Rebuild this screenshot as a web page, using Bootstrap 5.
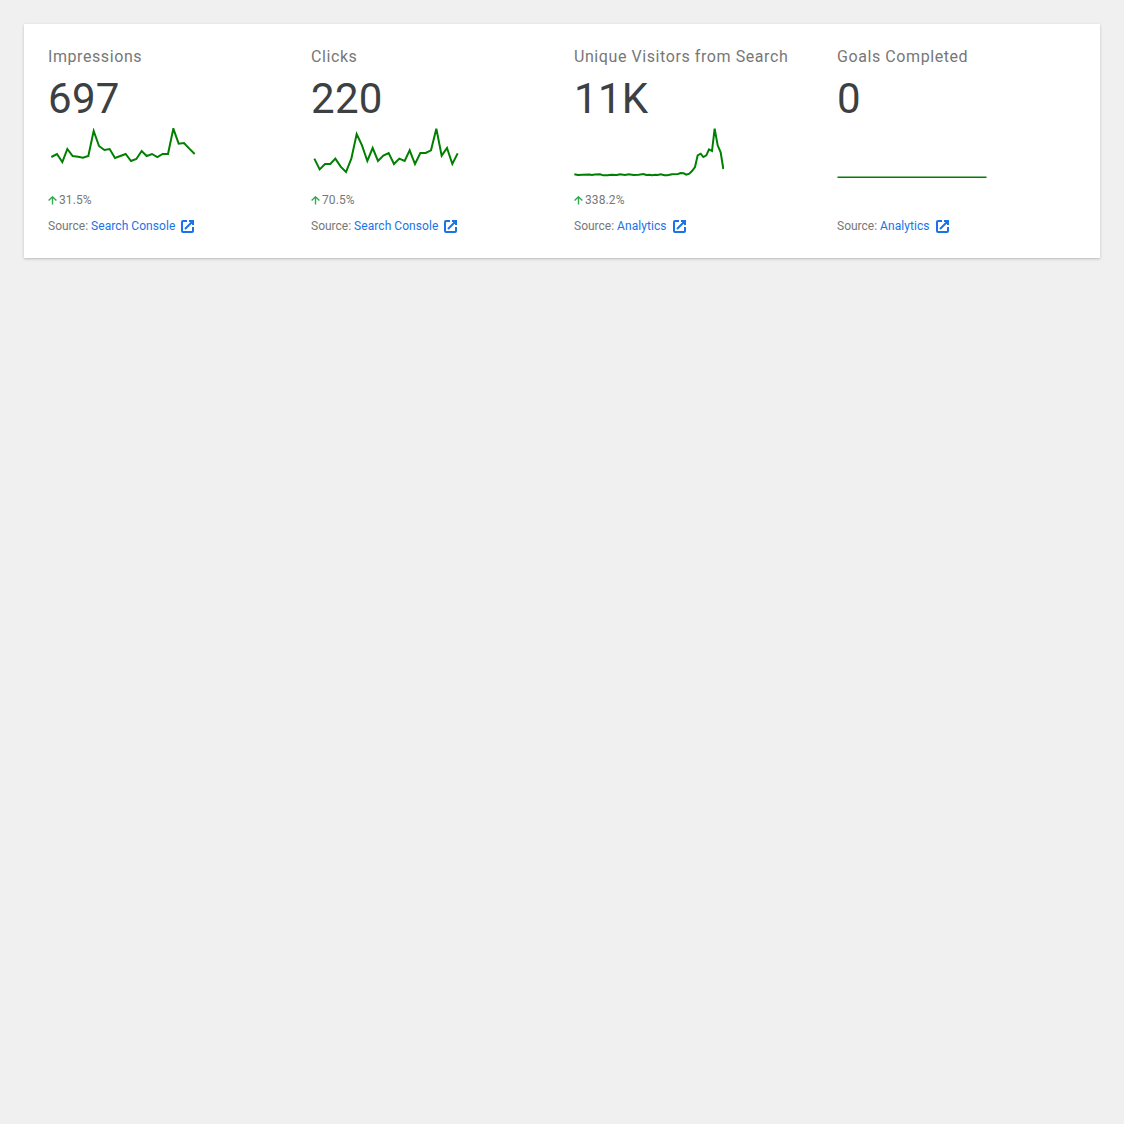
<!DOCTYPE html>
<html lang="en">
<head>
<meta charset="utf-8">
<meta name="viewport" content="width=device-width, initial-scale=1">
<title>Search overview</title>
<link href="https://cdn.jsdelivr.net/npm/bootstrap@5.3.0/dist/css/bootstrap.min.css" rel="stylesheet">
<style>
body{background:#f0f0f0;font-family:Roboto,"Liberation Sans",sans-serif;color:#777}
.overview{box-shadow:0 1px 3px rgba(0,0,0,.18),0 1px 1px rgba(0,0,0,.05)}
.metric{flex:1 1 0;min-width:0}
.metric-label{font-size:16px;line-height:18px;letter-spacing:.58px;font-weight:400;white-space:nowrap;color:#777}
.metric-value{font-size:42px;line-height:50px;letter-spacing:.3px;color:#3c4043;margin-top:8px}
.spark{width:150px;height:50px;margin-top:4px;fill:none;stroke:green;stroke-width:6}
.metric-change{font-size:12px;line-height:16px;height:16px;margin-top:14px;letter-spacing:.1px}
.metric-source{font-size:12px;line-height:16px;margin-top:10px}
.metric-source a{color:#1a73e8;letter-spacing:.06px}
.arrow{width:9px;height:9px;margin-right:2px;fill:none;stroke:#34a853;stroke-width:1.4}
.external{width:13px;height:13px;margin-left:6px;fill:none;stroke:#1a73e8;stroke-width:2}
</style>
</head>
<body>
<svg class="d-none">
<symbol id="up" viewBox="0 0 9 9"><path d="M4.5 8.5V.9M.6 4.6L4.5 .8l3.9 3.8"/></symbol>
<symbol id="ext" viewBox="0 0 13 13"><path d="M6 1H2Q1 1 1 2v9q0 1 1 1h9q1 0 1-1V7M8 1h4v4M12 1L4 9"/></symbol>
</svg>
<main class="p-4">
<section class="overview bg-white p-4 d-flex gap-4">
<article class="metric">
<h3 class="metric-label mb-0">Impressions</h3>
<div class="metric-value">697</div>
<svg class="spark d-block" viewBox="24 24 450 150"><polyline points="34,111 51,102 67,126 82,87 98,108 114,110 129,113 145,108 161,33 177,78 193,90 209,87 225,114 241,108 257,102 273,123 289,117 305,93 320,108 336,102 352,111 368,102 384,102 400,26 416,71 432,69 448,86 464,102"/></svg>
<div class="metric-change d-flex align-items-center"><svg class="arrow"><use href="#up"/></svg>31.5%</div>
<div class="metric-source d-flex align-items-center"><span>Source: <a class="text-decoration-none" href="#">Search Console</a></span><svg class="external"><use href="#ext"/></svg></div>
</article>
<article class="metric">
<h3 class="metric-label mb-0">Clicks</h3>
<div class="metric-value">220</div>
<svg class="spark d-block" viewBox="24 24 450 150"><polyline points="34,116 50,148 66,132 82,132 97,116 113,140 129,156 145,116 161,42 177,76 193,123 209,84 225,123 241,107 257,99 273,132 289,116 305,123 320,91 336,132 352,99 368,99 384,91 400,26 416,107 432,84 448,132 464,100"/></svg>
<div class="metric-change d-flex align-items-center"><svg class="arrow"><use href="#up"/></svg>70.5%</div>
<div class="metric-source d-flex align-items-center"><span>Source: <a class="text-decoration-none" href="#">Search Console</a></span><svg class="external"><use href="#ext"/></svg></div>
</article>
<article class="metric">
<h3 class="metric-label mb-0">Unique Visitors from Search</h3>
<div class="metric-value">11K</div>
<svg class="spark d-block" viewBox="24 24 450 150"><polyline points="25,163 36,165 50,164 70,163.500 78,165 86,163.500 102,163 112,166 125,166 136,164 153,165 162,163 177,165 188,163 203,165 218,164 232,162 241,165 250,164 258,166 268,164 275,165 284,163 296,166 304,166 318,163 336,162 344,159 353,160 361,164 370,161 378,153 387,141 395,106 404,101 412,111 421,106 429,88 438,93 446,26 455,76 464,97 472,147"/></svg>
<div class="metric-change d-flex align-items-center"><svg class="arrow"><use href="#up"/></svg>338.2%</div>
<div class="metric-source d-flex align-items-center"><span>Source: <a class="text-decoration-none" href="#">Analytics</a></span><svg class="external"><use href="#ext"/></svg></div>
</article>
<article class="metric">
<h3 class="metric-label mb-0">Goals Completed</h3>
<div class="metric-value">0</div>
<svg class="spark d-block" viewBox="24 24 450 150"><polyline points="25.5,172.5 472.5,172.5"/></svg>
<div class="metric-change"></div>
<div class="metric-source d-flex align-items-center"><span>Source: <a class="text-decoration-none" href="#">Analytics</a></span><svg class="external"><use href="#ext"/></svg></div>
</article>
</section>
</main>
<script src="https://cdn.jsdelivr.net/npm/bootstrap@5.3.0/dist/js/bootstrap.bundle.min.js"></script>
</body>
</html>
